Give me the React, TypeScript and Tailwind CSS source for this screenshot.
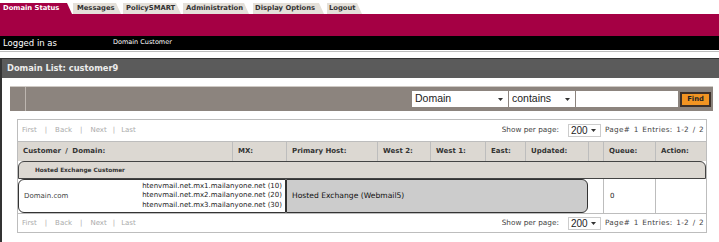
import React from 'react';

const tabs = [
  { label: 'Domain Status', cls: 'w-[72px] pl-[3px] bg-[#a50044] text-white' },
  { label: 'Messages', cls: 'ml-[1px] w-[48px] pl-[4px] bg-[#e4e0d9] text-[#333]' },
  { label: 'PolicySMART', cls: 'ml-[2px] w-[58px] pl-[3px] bg-[#e4e0d9] text-[#333]' },
  { label: 'Administration', cls: 'ml-[2px] w-[66px] pl-[3px] bg-[#e4e0d9] text-[#333]' },
  { label: 'Display Options', cls: 'ml-[4px] w-[71px] pl-[2px] bg-[#e4e0d9] text-[#333]' },
  { label: 'Logout', cls: 'ml-[3px] w-[35px] pl-[2px] bg-[#e4e0d9] text-[#333]' },
];

function Arrow() {
  return (
    <svg width="5" height="3" viewBox="0 0 5 3" className="shrink-0">
      <polygon points="0,0 5,0 2.5,3" fill="#333" />
    </svg>
  );
}

function Pager() {
  return (
    <div className="flex items-center text-[7px] text-[#aaa]">
      <span>First</span>
      <span className="mx-[8px]">|</span>
      <span>Back</span>
      <span className="mx-[8px]">|</span>
      <span>Next</span>
      <span className="mx-[6px]">|</span>
      <span>Last</span>
    </div>
  );
}

function PerPage() {
  return (
    <div className="flex items-center text-[7.3px] text-[#444]">
      <span>Show per page:</span>
      <div className="ml-[9px] flex h-[13px] w-[33px] items-center justify-between border border-[#ccc] bg-white pl-[2px] pr-[4px] font-['Liberation_Sans',Arial,sans-serif] text-[10px] text-[#222]">
        <span>200</span>
        <Arrow />
      </div>
      <span className="ml-[4px] tracking-[0.3px] [word-spacing:1px]">Page# 1 Entries: 1-2 / 2</span>
    </div>
  );
}

const headers = ['Customer / Domain:', 'MX:', 'Primary Host:', 'West 2:', 'West 1:', 'East:', 'Updated:', '', 'Queue:', 'Action:'];

export default function App() {
  return (
    <div className="h-[242px] w-[719px] overflow-hidden bg-white font-['DejaVu_Sans',Verdana,sans-serif] text-[#333]">
      {/* tab strip */}
      <div className="flex h-[14px] items-end">
        {tabs.map((t) => (
          <div
            key={t.label}
            className={`flex h-[11px] items-center font-bold text-[6.8px] [clip-path:polygon(0_0,calc(100%_-_5px)_0,100%_100%,0_100%)] ${t.cls}`}
          >
            {t.label}
          </div>
        ))}
      </div>
      <div className="h-[22px] bg-[#a50044]" />
      <div className="flex h-[14px] items-center bg-black text-white">
        <span className="w-[113px] pl-[3px] text-[8.5px]">Logged in as</span>
        <span className="text-[6.5px]">Domain Customer</span>
      </div>
      <div className="mt-[1px] h-[7px] border-t border-[#bdbdbd]" />

      {/* domain list panel */}
      <div className="h-[184px] border-l-2 border-t border-[#333]">
        <div className="flex h-[19px] items-center bg-[#5b5b5b] pl-[5px] text-[8.3px] font-bold text-[#ececec]">
          Domain List: customer9
        </div>

        {/* search bar */}
        <div className="ml-[8px] mt-[8px] flex h-[25px] w-[703px] border-t border-[#cfcac5] bg-[#8c847e]">
          <div className="w-[16px] border-r border-[#bdb6b0]" />
          <div className="flex flex-1 items-center justify-end pr-[2px]">
            <div className="flex h-[16px] w-[96px] items-center justify-between bg-white pl-[3px] pr-[5px] font-['Liberation_Sans',Arial,sans-serif] text-[10.5px] text-[#222]">
              <span>Domain</span>
              <Arrow />
            </div>
            <div className="ml-[1px] flex h-[16px] w-[66px] items-center justify-between bg-white pl-[3px] pr-[5px] font-['Liberation_Sans',Arial,sans-serif] text-[10.5px] text-[#222]">
              <span>contains</span>
              <Arrow />
            </div>
            <div className="ml-[1px] h-[16px] w-[102px] bg-white" />
            <button className="ml-[2px] flex h-[15px] w-[31px] items-center justify-center border-2 border-[#3d3028] bg-[#f29422] text-[6.8px] font-bold text-[#222]">
              Find
            </button>
          </div>
        </div>

        {/* results table */}
        <div className="ml-[15px] mt-[8px] w-[690px] border border-[#bdbdbd]">
          <div className="flex h-[21px] items-center justify-between pl-[4px] pr-[2px]">
            <Pager />
            <PerPage />
          </div>

          <div className="grid h-[20px] grid-cols-[214px_54px_91px_53px_55px_40px_63px_15px_52px_51px] border-t border-[#bdbdbd] bg-[#dcd8d2]">
            {headers.map((h, i) => (
              <div
                key={i}
                className={`flex items-center pl-[5px] text-[7px] font-bold text-[#333] ${i > 0 ? 'border-l border-[#bdbdbd]' : '[word-spacing:2px]'}`}
              >
                {h}
              </div>
            ))}
          </div>

          <div className="flex h-[18px] items-center rounded-t-[6px] border border-[#444] bg-[#dcd8d2] pl-[16px] text-[5.8px] font-bold text-[#333]">
            Hosted Exchange Customer
          </div>

          <div className="grid h-[35px] grid-cols-[214px_54px_91px_53px_55px_40px_63px_15px_52px_51px] border-b border-[#bdbdbd]">
            <div className="col-span-2 flex items-center justify-between rounded-l-[6px] border border-[#333] bg-white pl-[5px] pr-[3px] text-[7px]">
              <span className="text-[#444]">Domain.com</span>
              <div className="flex flex-col items-end leading-[9.5px] text-[#222]">
                <span>htenvmail.net.mx1.mailanyone.net (10)</span>
                <span>htenvmail.net.mx2.mailanyone.net (20)</span>
                <span>htenvmail.net.mx3.mailanyone.net (30)</span>
              </div>
            </div>
            <div className="col-span-5 flex items-center rounded-r-[6px] border border-[#333] bg-[#cccccc] pl-[5px] text-[7.6px] text-[#111]">
              Hosted Exchange (Webmail5)
            </div>
            <div />
            <div className="flex items-center border-l border-[#bdbdbd] pl-[6px] text-[7px] text-[#222]">0</div>
            <div className="border-l border-[#bdbdbd]" />
          </div>

          <div className="flex h-[18px] items-center justify-between pl-[4px] pr-[2px]">
            <Pager />
            <PerPage />
          </div>
        </div>
      </div>
    </div>
  );
}
